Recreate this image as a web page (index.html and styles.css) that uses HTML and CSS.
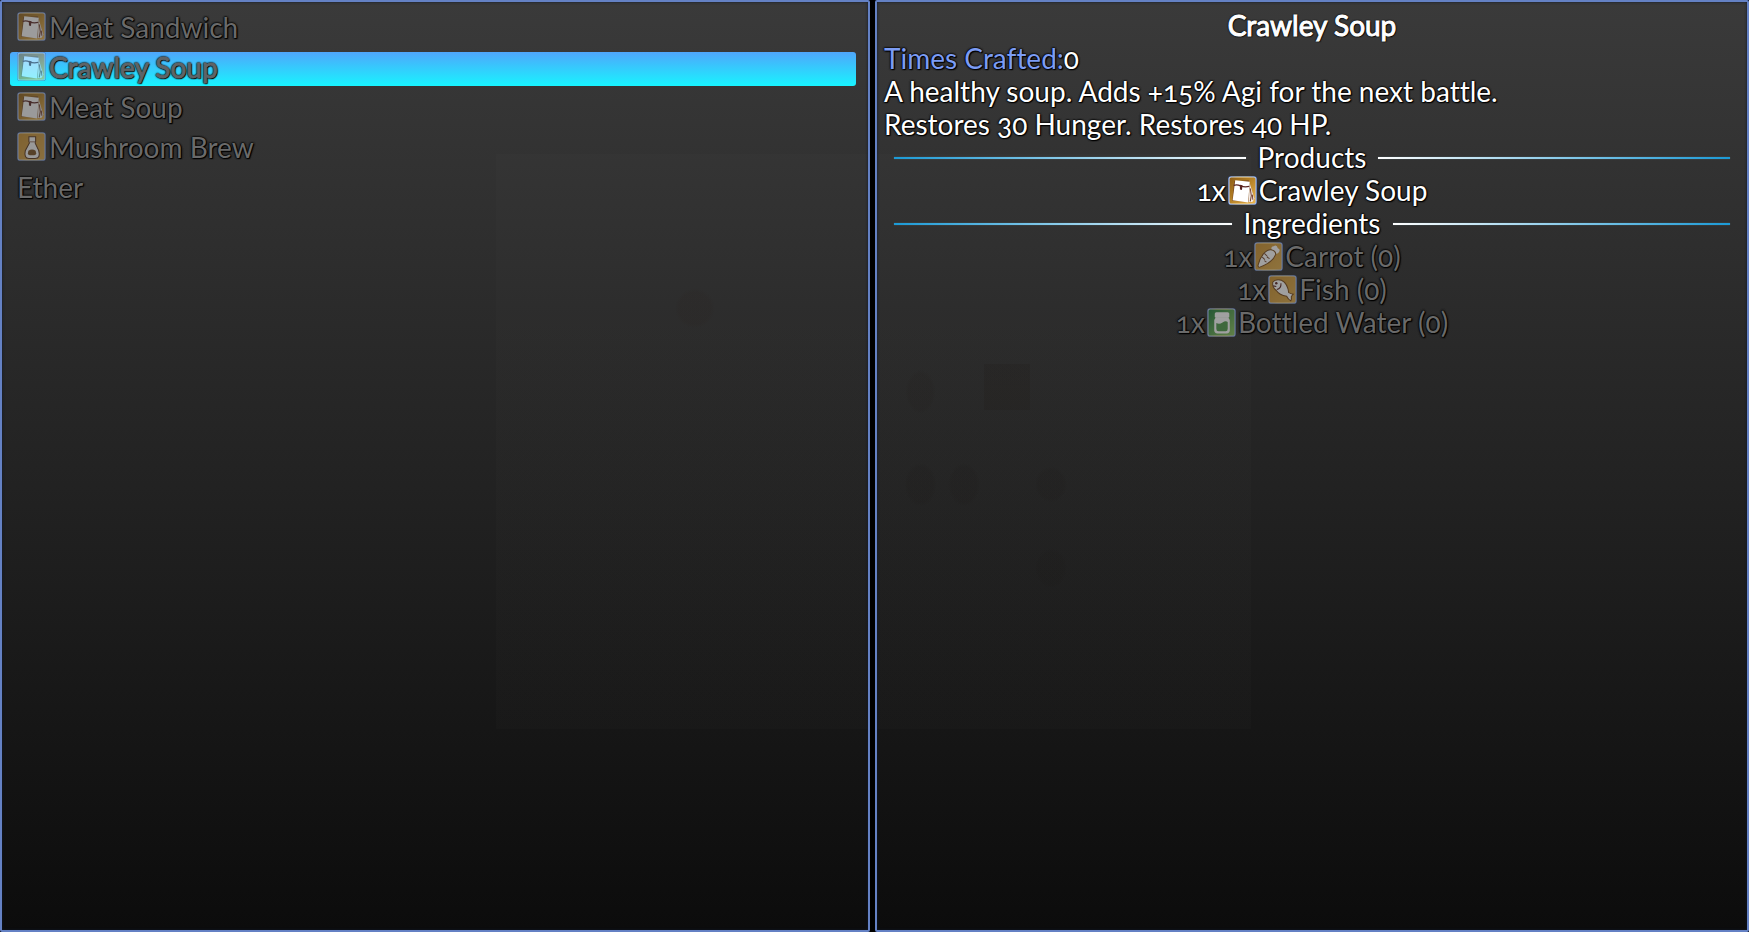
FILE: index.html
```html
<!DOCTYPE html>
<html lang="en">
<head>
    <meta charset="UTF-8">
    <meta name="viewport" content="width=device-width, initial-scale=1.0">
    <title>Crafting</title>
    <link rel="stylesheet" href="styles.css">
</head>
<body>
    <!-- Shared icons -->
    <svg class="sprites" aria-hidden="true">
        <defs>
            <linearGradient id="gold" x1="0" y1="0" x2="1" y2="1">
                <stop offset="0" stop-color="#8a5a14"/>
                <stop offset="0.5" stop-color="#b98528"/>
                <stop offset="1" stop-color="#f0b850"/>
            </linearGradient>
            <linearGradient id="amber" x1="0" y1="0" x2="1" y2="1">
                <stop offset="0" stop-color="#c98f2c"/>
                <stop offset="1" stop-color="#e0ad4c"/>
            </linearGradient>
            <linearGradient id="green" x1="0" y1="0" x2="1" y2="1">
                <stop offset="0" stop-color="#1f7a3c"/>
                <stop offset="1" stop-color="#8fc860"/>
            </linearGradient>
            <linearGradient id="rim" x1="0" y1="0" x2="1" y2="0">
                <stop offset="0" stop-color="#b4c8f0"/>
                <stop offset="0.3" stop-color="#f6e3b0"/>
                <stop offset="0.7" stop-color="#f6e3b0"/>
                <stop offset="1" stop-color="#a8c0f0"/>
            </linearGradient>
        </defs>
        <symbol id="bag" viewBox="0 0 28 28">
            <rect x="0" y="0" width="28" height="28" rx="3" fill="#34508c"/>
            <rect x="1" y="1" width="26" height="26" rx="2" fill="url(#gold)" stroke="url(#rim)"/>
            <path d="M6 5 L20 4 L25 21 L23 25 L4 24 Z" fill="#5a2a1c" opacity="0.6"/>
            <path d="M7 4 L21 5.500 L19.500 25.500 L4.500 23.500 Z" fill="#fff"/>
            <path d="M21 7 L25.500 22 L23.500 25 L20 25 Z" fill="#f4ece6"/>
            <path d="M21.500 12 L22.500 19 L21.500 24.500 M23.500 18 L24 23" fill="none" stroke="#7a4636"/>
            <path d="M5.500 9 Q9 8 12 9.500 Q16 11 20.500 10" fill="none" stroke="#5a2420" stroke-width="1.200"/>
            <path d="M11.500 8.500 L14 9 L13.500 13.500 L11.500 13 Z" fill="#5a2420"/>
        </symbol>
        <symbol id="flask" viewBox="0 0 28 28">
            <rect x="0" y="0" width="28" height="28" rx="3" fill="#34508c"/>
            <rect x="1" y="1" width="26" height="26" rx="2" fill="url(#amber)" stroke="url(#rim)"/>
            <path d="M11.500 4.500 H18 V9 L17.500 10.500 L21 18 Q23 25.500 17.500 25.500 H11.500 Q6.500 25.500 8 18 L12 10.500 L11.500 9 Z" fill="#fff" stroke="#5a3418"/>
            <path d="M12 9.500 H17.500" stroke="#9a7a68"/>
            <path d="M11 18 Q14.500 16 18 18 L18.500 20.500 Q18.500 22.500 16.500 22.500 H12.500 Q10.500 22.500 10.500 20.500 Z" fill="#7a5020"/>
        </symbol>
        <symbol id="carrot" viewBox="0 0 28 28">
            <rect x="0" y="0" width="28" height="28" rx="3" fill="#34508c"/>
            <rect x="1" y="1" width="26" height="26" rx="2" fill="url(#amber)" stroke="url(#rim)"/>
            <path d="M17 8 Q16 4 19 4 Q22 2 23 6 Q26 7 24 10 Q23 12 20 11 Z" fill="#fff"/>
            <path d="M16.500 7.500 Q21 8.500 21 12 Q18 20 5 24.500 Q3.500 24 4 22 Q6 14 11 9.500 Q14 7 16.500 7.500 Z" fill="#fff" stroke="#7a4a18"/>
            <path d="M10 11 L13 14 M8 14.500 L10.500 17 M15 16 L12.500 14.500 M12 19.500 L10 18" stroke="#7a4a30" fill="none"/>
        </symbol>
        <symbol id="fish" viewBox="0 0 28 28">
            <rect x="0" y="0" width="28" height="28" rx="3" fill="#34508c"/>
            <rect x="1" y="1" width="26" height="26" rx="2" fill="url(#amber)" stroke="url(#rim)"/>
            <path d="M4.500 7 Q7 3.500 13 5 Q19 8 20 17 Q22 18 24.500 18.500 Q23 20 22.500 21 Q23 23 22 25 Q19.500 23.500 18 20.500 Q11 19.500 8 15 Q4 12 4.500 7 Z" fill="#fff" stroke="#7a4a18"/>
            <circle cx="8" cy="8" r="1.200" fill="#5a2420"/>
            <path d="M12.500 8 Q13 13 8.500 14 M5 10.500 L8 11" fill="none" stroke="#5a2420"/>
        </symbol>
        <symbol id="jar" viewBox="0 0 28 28">
            <rect x="0" y="0" width="28" height="28" rx="3" fill="#34508c"/>
            <rect x="1" y="1" width="26" height="26" rx="2" fill="url(#green)" stroke="url(#rim)"/>
            <rect x="7.500" y="4" width="14" height="5.500" rx="1.500" fill="#fff"/>
            <path d="M8.500 9 H20.500 L22 11.500 V21.500 Q22 24.500 19 24.500 H10 Q7 24.500 7 21.500 V11.500 Z" fill="#fff"/>
            <path d="M9 14.500 Q12 16 15 14 Q18 12 20 13.500 V20 Q20 22.500 18 22.500 H11 Q9 22.500 9 20 Z" fill="#4f9a4a"/>
        </symbol>
    </svg>

    <main class="crafting">
        <nav class="panel recipes" aria-label="Recipes">
            <button class="recipe" type="button"><svg class="icon"><use href="#bag"/></svg><span>Meat Sandwich</span></button>
            <button class="recipe selected" type="button" aria-current="true"><svg class="icon"><use href="#bag"/></svg><span>Crawley Soup</span></button>
            <button class="recipe" type="button"><svg class="icon"><use href="#bag"/></svg><span>Meat Soup</span></button>
            <button class="recipe" type="button"><svg class="icon"><use href="#flask"/></svg><span>Mushroom Brew</span></button>
            <button class="recipe" type="button"><span>Ether</span></button>
        </nav>

        <section class="panel details">
            <h1 class="title">Crawley Soup</h1>
            <p><span class="label">Times Crafted:</span>0</p>
            <p>A healthy soup. Adds +15% Agi for the next battle.<br>Restores 30 Hunger. Restores 40 HP.</p>

            <h2 class="divider">Products</h2>
            <ul class="items">
                <li class="item">1x<svg class="icon"><use href="#bag"/></svg>Crawley Soup</li>
            </ul>

            <h2 class="divider">Ingredients</h2>
            <ul class="items">
                <li class="item missing">1x<svg class="icon"><use href="#carrot"/></svg>Carrot (0)</li>
                <li class="item missing">1x<svg class="icon"><use href="#fish"/></svg>Fish (0)</li>
                <li class="item missing">1x<svg class="icon"><use href="#jar"/></svg>Bottled Water (0)</li>
            </ul>
        </section>
    </main>
</body>
</html>
```
FILE: styles.css
```css
* {
    box-sizing: border-box;
}
body {
    margin: 0;
    background: #000;
    color: #fff;
    font-family: Lato, "Open Sans", sans-serif;
    font-size: 28px;
    line-height: 33px;
    font-variant-numeric: oldstyle-nums;
    font-variant-ligatures: none;
    text-shadow: 0 0 2px #000, 0 0 2px #000, 0 0 2px #000, 1px 1px 1px #000;
}
h1, h2, p, ul {
    margin: 0;
    padding: 0;
    font-size: 28px;
    font-weight: 400;
}
.sprites {
    position: absolute;
    width: 0;
    height: 0;
}
.crafting {
    display: grid;
    grid-template-columns: 870fr 874fr;
    gap: 5px;
    min-height: 100vh;
}
.panel {
    border: 2px solid #6481c4;
    border-radius: 2px;
    background: linear-gradient(#3a3a3a, #0c0c0c);
    box-shadow: inset 0 0 3px #101828;
}

/* Recipe list */
.recipes {
    display: flex;
    flex-direction: column;
    gap: 6px;
    padding: 10px 12px 10px 8px;
    /* faint window behind the panel */
    background:
        radial-gradient(circle at 80% 33%, rgba(40, 30, 25, 0.12) 16px, transparent 20px),
        linear-gradient(rgba(255, 250, 235, 0.012), rgba(255, 250, 235, 0.012)) 100% 43% / 43% 62% no-repeat,
        linear-gradient(#3a3a3a, #0c0c0c);
}
.recipe {
    display: flex;
    align-items: flex-start;
    gap: 3px;
    height: 34px;
    padding: 0 7px;
    border: none;
    border-radius: 3px;
    background: none;
    color: #6a6a6a;
    font: inherit;
    font-variant-numeric: inherit;
    font-variant-ligatures: inherit;
    line-height: 31px;
    text-shadow: inherit;
    text-align: left;
}
.recipe .icon {
    opacity: 0.5;
}
.recipe.selected {
    background: linear-gradient(#4fa6fb, #18f4ff);
    color: #5e6468;
    -webkit-text-stroke: 1px #5e6468;
}
.icon {
    flex: none;
    width: 29px;
    height: 29px;
}

/* Recipe details */
.details {
    padding: 7px;
    background:
        radial-gradient(ellipse 15px 22px at 5% 42%, rgba(30, 25, 22, 0.12) 80%, transparent),
        linear-gradient(rgba(30, 25, 22, 0.2), rgba(30, 25, 22, 0.2)) 13% 41% / 46px 46px no-repeat,
        radial-gradient(ellipse 16px 22px at 5% 52%, rgba(25, 22, 20, 0.12) 80%, transparent),
        radial-gradient(ellipse 16px 22px at 10% 52%, rgba(25, 22, 20, 0.12) 80%, transparent),
        radial-gradient(ellipse 16px 18px at 20% 52%, rgba(25, 22, 20, 0.12) 80%, transparent),
        radial-gradient(ellipse 16px 20px at 20% 61%, rgba(25, 22, 20, 0.12) 80%, transparent),
        linear-gradient(rgba(255, 250, 235, 0.012), rgba(255, 250, 235, 0.012)) 0 43% / 43% 62% no-repeat,
        linear-gradient(#3a3a3a, #0c0c0c);
}
.title {
    text-align: center;
    -webkit-text-stroke: 1px #fff;
}
.label {
    color: #7c9cf4;
}
.divider {
    display: flex;
    align-items: center;
    gap: 12px;
    padding: 0 10px;
}
.divider::before,
.divider::after {
    content: "";
    flex: 1;
    height: 2px;
    background: linear-gradient(to right, #1b9ad6, #fff);
    box-shadow: 0 0 1px #6a8a98;
}
.divider::after {
    background: linear-gradient(to left, #1b9ad6, #fff);
}
.items {
    list-style: none;
}
.item {
    display: flex;
    justify-content: center;
    align-items: center;
    gap: 2px;
    height: 33px;
}
.item.missing {
    color: #6a6a6a;
}
.item.missing .icon {
    opacity: 0.55;
}
```
